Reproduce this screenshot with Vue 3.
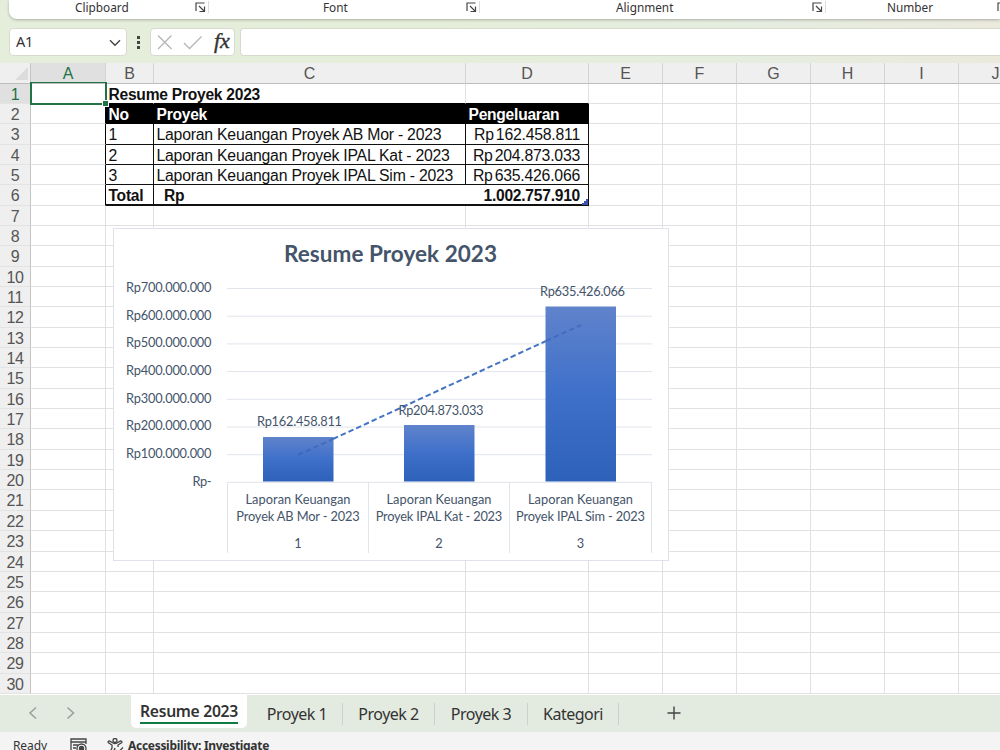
<script setup>
import { ref, computed } from "vue";

const groups = ref([
    { name: "Clipboard", left: 75, width: 54, launcher: 66 },
    { name: "Font", left: 323, width: 24, launcher: 119 },
    { name: "Alignment", left: 616, width: 55, launcher: 141 },
    { name: "Number", left: 887, width: 45, launcher: 65 },
]);

const columns = ["A", "B", "C", "D", "E", "F", "G", "H", "I", "J"];

// cell contents, keyed by row number then column
const cells = {
    1: { B: "Resume Proyek 2023" },
    2: { B: "No", C: "Proyek", D: "Pengeluaran" },
    3: { B: "1", C: "Laporan Keuangan Proyek AB Mor - 2023", D: "162.458.811" },
    4: { B: "2", C: "Laporan Keuangan Proyek IPAL Kat - 2023", D: "204.873.033" },
    5: { B: "3", C: "Laporan Keuangan Proyek IPAL Sim - 2023", D: "635.426.066" },
    6: { B: "Total", C: "Rp", D: "1.002.757.910" },
};

const isMoney = (row, col) => col === "D" && row >= 3 && row <= 5;

const axis = computed(() =>
    [700, 600, 500, 400, 300, 200, 100, 0].map((n, i) => ({
        text: n ? `Rp${n}.000.000` : "Rp-",
        y: 60.5 + i * 27.7,
        width: n ? 85.5 : 19,
    }))
);

const bars = ref([
    { x: 150, y: 209, h: 44.5, label: "Rp162.458.811", lx: 186.5, ly: 198, name: "Proyek AB Mor - 2023", nw: 123.5, no: 1, cx: 185 },
    { x: 291, y: 197, h: 56.5, label: "Rp204.873.033", lx: 328, ly: 187, name: "Proyek IPAL Kat - 2023", nw: 126.5, no: 2, cx: 326 },
    { x: 432.5, y: 78.5, h: 175, label: "Rp635.426.066", lx: 469.5, ly: 67.5, name: "Proyek IPAL Sim - 2023", nw: 129, no: 3, cx: 467.5 },
]);

const tabs = ref([
    { name: "Proyek 1", width: 91 },
    { name: "Proyek 2", width: 92 },
    { name: "Proyek 3", width: 93 },
    { name: "Kategori", width: 91 },
]);
</script>

<template>
    <div class="excel">
        <div class="top">
            <div class="ribbon">
                <div v-for="g in groups" :key="g.name" class="group" :style="{ left: g.left - 9 + 'px' }">
                    <span class="group_name" :style="{ width: g.width + 'px' }">{{ g.name }}</span>
                    <svg class="launcher" :style="{ marginLeft: g.launcher + 'px' }" width="11" height="11" viewBox="0 0 11 11">
                        <path d="M1 9V1H9.5M4 4L9 9M9.5 4.5V9.5H4.5" />
                    </svg>
                    <i class="group_line"></i>
                </div>
            </div>
            <div class="formula">
                <div class="name-box">
                    <span>A1</span>
                    <svg width="12" height="8" viewBox="0 0 12 8"><path d="M1 1.3L6 6.3L11 1.3" /></svg>
                </div>
                <div class="dots"><i></i><i></i><i></i></div>
                <div class="buttons">
                    <svg width="84" height="26" viewBox="0 0 84 26">
                        <path d="M7 6.5L20.5 20M20.5 6.5L7 20M33 14L38.5 19.5L50.5 7.5" />
                    </svg>
                    <span class="fx">fx</span>
                </div>
                <div class="input"></div>
            </div>
        </div>

        <div class="sheet">
            <div class="row head">
                <div class="corner"><svg width="13" height="13"><path d="M13 0V13H0Z" /></svg></div>
                <div v-for="c in columns" :key="c" :class="['col', 'col-' + c, { active: c === 'A' }]">{{ c }}</div>
            </div>
            <div v-for="r in 30" :key="r" :class="['row', 'row-' + r]">
                <div :class="['num', { active: r === 1 }]">{{ r }}</div>
                <div v-for="c in columns" :key="c" :class="['cell', 'col-' + c]">
                    <span v-if="isMoney(r, c)" class="currency">Rp</span>
                    <span v-if="cells[r] && cells[r][c]">{{ cells[r][c] }}</span>
                </div>
            </div>

            <div class="selection"><i></i></div>
            <svg class="table-corner" width="6" height="6"><path d="M6 0V6H0V4H2V2H4V0Z" /></svg>

            <svg class="chart" width="556" height="333" viewBox="0 0 556 333">
                <defs>
                    <linearGradient id="bar" x1="0" y1="0" x2="0" y2="1">
                        <stop offset="0" stop-color="#6083cb" />
                        <stop offset="0.5" stop-color="#3e70ca" />
                        <stop offset="1" stop-color="#2e61ba" />
                    </linearGradient>
                </defs>
                <rect class="frame" x="0.5" y="0.5" width="555" height="332" />
                <text class="title" x="171" y="34" textLength="213">Resume Proyek 2023</text>
                <g v-for="a in axis" :key="a.text">
                    <line class="grid" x1="114" x2="539" :y1="a.y" :y2="a.y" />
                    <text :x="98.5 - a.width" :y="a.y + 3.3" :textLength="a.width">{{ a.text }}</text>
                </g>
                <path class="grid" d="M114.5 254V325M255.5 254V325M396.5 254V325M538.5 254V325" />
                <rect v-for="b in bars" :key="b.no" :x="b.x" :y="b.y" width="70.5" :height="b.h" fill="url(#bar)" />
                <line class="trend faint" x1="185" y1="227" x2="220" y2="211" />
                <line class="trend" x1="220" y1="211" x2="433" y2="113" />
                <line class="trend faint" x1="433" y1="113" x2="468" y2="97" />
                <g v-for="b in bars" :key="'t' + b.no" text-anchor="middle">
                    <text :x="b.lx" :y="b.ly" textLength="85">{{ b.label }}</text>
                    <text :x="b.cx" y="275.6" textLength="105">Laporan Keuangan</text>
                    <text :x="b.cx" y="293.3" :textLength="b.nw">{{ b.name }}</text>
                    <text :x="b.cx" y="320.2">{{ b.no }}</text>
                </g>
            </svg>
        </div>

        <div class="tabs">
            <svg class="arrows" width="131" height="36" viewBox="0 0 131 36">
                <path d="M36 12.5L30 18L36 23.5M67.5 12.5L73.5 18L67.5 23.5" />
            </svg>
            <div class="tab current"><span>Resume 2023</span></div>
            <div v-for="t in tabs" :key="t.name" class="tab" :style="{ width: t.width + 'px' }">{{ t.name }}</div>
            <svg class="plus" width="14" height="14" viewBox="0 0 14 14"><path d="M7 0.5V13.5M0.5 7H13.5" /></svg>
        </div>

        <div class="status">
            <span class="ready">Ready</span>
            <svg class="macro" width="18" height="16" viewBox="0 0 18 16">
                <path d="M5 14H1V1H16V6M1 4H16M3 7H8M3 10H6" />
                <circle cx="11.5" cy="10.5" r="4.5" />
                <circle cx="11.5" cy="10.5" r="2" class="fill" />
            </svg>
            <svg class="access" width="18" height="16" viewBox="0 0 18 16">
                <circle cx="8" cy="2.5" r="2" />
                <path d="M6 5L2.5 3Q0.8 3 1.2 4.5L5 7V10L3 14M10 5L13.5 3Q15.2 3 14.8 4.5L11 7V9M6 5Q8 6 10 5M8 10L6 15M8.5 12L11 14.5L16 9.5" />
            </svg>
            <span class="investigate">Accessibility: Investigate</span>
        </div>
    </div>
</template>

<style>
body {
    overflow: hidden;
}
</style>

<style scoped>
.excel {
    width: 1000px;
    height: 750px;
    overflow: hidden;
    background: #fff;
    color: #333;
    font-family: "Noto Sans", sans-serif;
    display: flex;
    flex-direction: column;
}

.excel * {
    box-sizing: border-box;
}

svg {
    display: block;
    flex: none;
    fill: none;
}

.top {
    height: 63px;
    flex: none;
    background: linear-gradient(90deg, #e5eedb 0%, #e5eed9 45%, #e5ede0 75%, #eae9dc 100%);
}

.ribbon {
    position: relative;
    height: 19px;
    margin-left: 9px;
    background: #fff;
    border-bottom-left-radius: 8px;
    box-shadow: 0 1px 3px #0004;
}

/* ribbon groups sit at free offsets on the strip */
.group {
    position: absolute;
    top: 0;
    display: flex;
    align-items: center;
    height: 14px;
}

.group_name {
    font-size: 11.8px;
    line-height: 14px;
    white-space: nowrap;
}

.launcher {
    stroke: #444;
    stroke-width: 1.2;
    margin-top: 1px;
}

.group_line {
    width: 1px;
    height: 12px;
    margin-left: 2px;
    background: #ddd;
}

.formula {
    display: flex;
    height: 28px;
    margin: 9px 0 0 9px;
}

.name-box,
.buttons,
.input {
    background: #fff;
    border: 1px solid #d6dacf;
    border-radius: 4px;
}

.name-box {
    width: 118px;
    display: flex;
    align-items: center;
    justify-content: space-between;
    padding: 0 5px 0 6px;
    font-size: 14.5px;
    line-height: 24px;
    letter-spacing: -0.3px;
}

.name-box span {
    margin-top: -2px;
}

.name-box svg {
    stroke: #444;
    stroke-width: 1.4;
    margin-top: 2px;
}

.dots {
    width: 23px;
    display: flex;
    flex-direction: column;
    align-items: center;
    justify-content: center;
    gap: 2px;
}

.dots i {
    width: 3px;
    height: 3px;
    background: #444;
}

.buttons {
    width: 85px;
    display: flex;
}

.buttons svg {
    stroke: #b5b5b5;
    stroke-width: 1.3;
    margin-right: -21px;
}

.fx {
    font: italic 22px/23px "Liberation Serif", serif;
    color: #333;
    -webkit-text-stroke: 0.4px #333;
}

.input {
    flex: 1;
    margin-left: 5px;
    border-right: 0;
    border-radius: 4px 0 0 4px;
}

.sheet {
    position: relative;
    height: 632px;
    flex: none;
    overflow: hidden;
    font-family: "Liberation Sans", sans-serif;
    font-size: 16px;
}

.row {
    display: flex;
    width: 1033px;
    height: 20.357px;
}

.head {
    height: 20.6px;
    background: #efefef;
}

.corner,
.num {
    width: 31px;
    flex: none;
    background: #efefef;
    border-right: 1px solid #c4c4c4;
}

.corner {
    border-bottom: 1px solid #bdbdbd;
    padding: 4px 0 0 15px;
}

.corner svg {
    fill: #dcdcdc;
}

.num {
    text-align: center;
    line-height: 21px;
    border-bottom: 1px solid #e3e3e3;
    color: #555;
    letter-spacing: -0.3px;
}

.num.active,
.head .active {
    background: #e0e0e0;
    color: #217346;
}

.col {
    text-align: center;
    line-height: 21px;
    color: #555;
    border-right: 1px solid #d4d4d4;
    border-bottom: 1px solid #bdbdbd;
}

.cell {
    display: flex;
    border-right: 1px solid #e1e1e3;
    border-bottom: 1px solid #e1e1e3;
    line-height: 21px;
    padding-left: 2.5px;
    white-space: nowrap;
    color: #111;
    font-size: 15.8px;
    letter-spacing: -0.23px;
}

.col-A {
    width: 75px;
}

.col-B {
    width: 48px;
}

.col-C {
    width: 312px;
}

.col-D {
    width: 123px;
}

.col-E,
.col-F,
.col-G,
.col-H,
.col-I,
.col-J {
    width: 74px;
}

.row-1 .cell,
.row-2 .cell,
.row-6 .cell {
    font-weight: bold;
    font-size: 15.6px;
    letter-spacing: -0.25px;
}

.row-1 .col-B {
    border-right-color: transparent;
}

.row-1 .col-B,
.row-1 .col-C,
.row-1 .col-D {
    border-bottom-color: #000;
}

.row-2 .col-B,
.row-2 .col-C,
.row-2 .col-D {
    background: #000;
    border-color: #000;
    color: #fff;
}

.row-2 .col-A,
.row-3 .col-A,
.row-4 .col-A,
.row-5 .col-A,
.row-6 .col-A {
    border-right-color: #000;
}

.row-3 .col-B,
.row-3 .col-C,
.row-3 .col-D,
.row-4 .col-B,
.row-4 .col-C,
.row-4 .col-D,
.row-5 .col-B,
.row-5 .col-C,
.row-5 .col-D,
.row-6 .col-B,
.row-6 .col-C,
.row-6 .col-D {
    border-color: #111;
}

.row-6 .col-B,
.row-6 .col-C,
.row-6 .col-D {
    border-bottom-width: 2px;
}

.row-6 .col-C {
    border-right: 0;
    padding-left: 10px;
}

.row-3 .col-D,
.row-4 .col-D,
.row-5 .col-D,
.row-6 .col-D {
    justify-content: flex-end;
    padding-right: 8px;
}

.currency {
    margin-right: 2px;
}

.selection {
    position: absolute;
    left: 30px;
    top: 19px;
    width: 77px;
    height: 23px;
    border: 2px solid #217346;
    border-width: 1.5px 2px 2px 2px;
}

.selection i {
    position: absolute;
    right: -3px;
    bottom: -3px;
    width: 5px;
    height: 5px;
    background: #217346;
    outline: 1px solid #fff;
}

.table-corner {
    position: absolute;
    left: 582px;
    top: 136px;
    fill: #3f51b0;
}

.chart {
    position: absolute;
    left: 113px;
    top: 165px;
}

.chart text {
    font-family: Lato, sans-serif;
    font-size: 12.8px;
    fill: #44546a;
}

.chart .title {
    font-weight: bold;
    font-size: 22.5px;
}

.frame {
    fill: #fff;
    stroke: #dfe2ea;
}

.grid {
    stroke: #e0e4eb;
}

.trend {
    stroke: #4472c4;
    stroke-width: 2;
    stroke-dasharray: 5.5 3;
}

.faint {
    stroke: #3561b5;
    opacity: 0.6;
}

.tabs {
    height: 37px;
    flex: none;
    display: flex;
    background: #e3eae0;
}

.arrows {
    stroke: #9a9f98;
    stroke-width: 1.5;
}

.tab {
    height: 22px;
    margin-top: 8px;
    line-height: 22px;
    text-align: center;
    font-size: 16px;
    letter-spacing: -0.5px;
    border-right: 1px solid #ccd2c9;
    white-space: nowrap;
}

.tab.current {
    width: 116px;
    height: 33px;
    margin: 0 5px 0 0;
    padding-top: 5px;
    background: #fff;
    border: 0;
    border-radius: 0 0 5px 5px;
    font-weight: 600;
    font-size: 15.7px;
    letter-spacing: -0.3px;
}

.tab.current span {
    display: inline-block;
    height: 24px;
    border-bottom: 2px solid #107c41;
}

.plus {
    margin: 11px 0 0 48px;
    stroke: #444;
    stroke-width: 1.4;
}

.status {
    flex: 1;
    display: flex;
    background: #f4f4f4;
    font-size: 12px;
    line-height: 16px;
    padding: 6px 0 0 13px;
}

.ready {
    width: 57px;
    letter-spacing: -0.1px;
}

.status svg {
    stroke: #444;
    stroke-width: 1.3;
}

.status .fill {
    fill: #444;
}

.access {
    margin-left: 19px;
    margin-right: 3px;
}

.investigate {
    font-weight: bold;
    letter-spacing: -0.3px;
    white-space: nowrap;
}
</style>
